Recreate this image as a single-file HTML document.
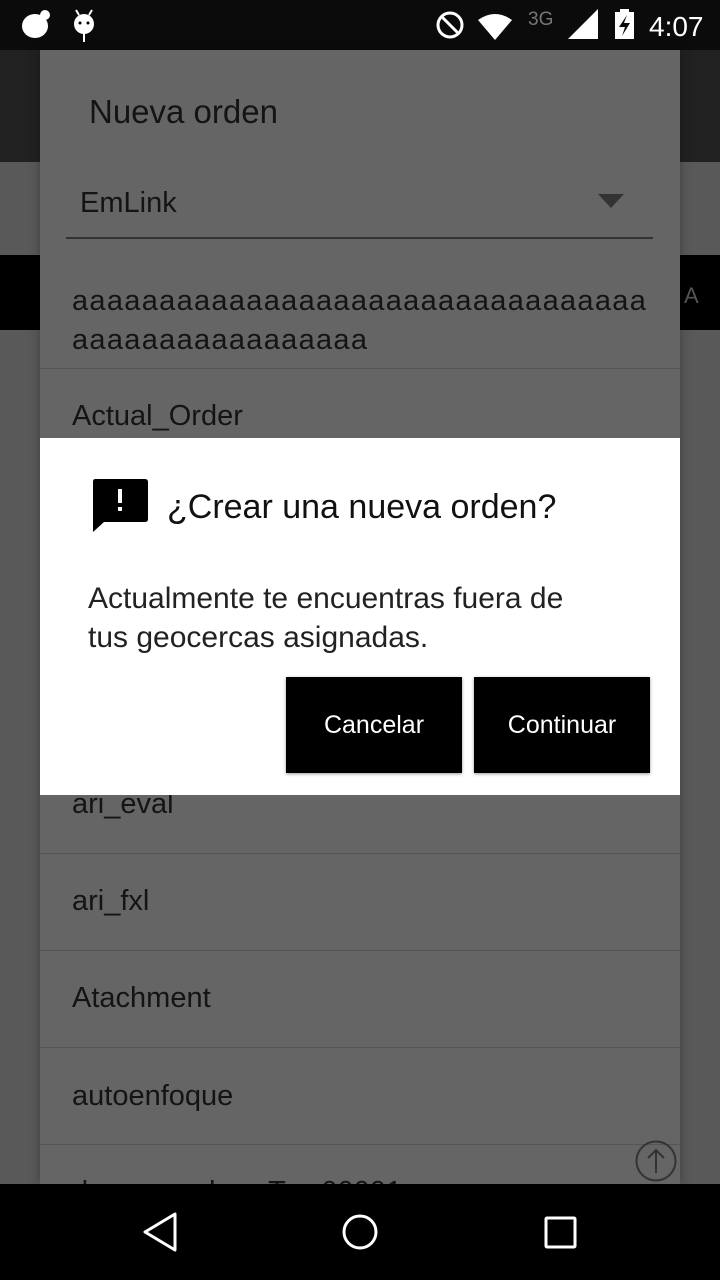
<!DOCTYPE html>
<html><head><meta charset="utf-8"><style>
*{margin:0;padding:0;box-sizing:border-box}
body{width:720px;height:1280px;overflow:hidden;background:#595959;font-family:"Liberation Sans",sans-serif;position:relative}
.abs{position:absolute}
.t{color:#141414;font-size:29px;white-space:nowrap}
.div{position:absolute;left:40px;width:640px;height:1px;background:#555}
</style></head><body>
<div class="abs" style="left:0;top:0;width:720px;height:50px;background:#0b0b0b"></div>
<div class="abs" style="left:0;top:50px;width:720px;height:112px;background:#212121"></div>
<div class="abs" style="left:0;top:255px;width:720px;height:75px;background:#000"></div>
<div class="abs" style="left:684px;top:283px;color:#555;font-size:22px">A</div>
<svg class="abs" style="left:0;top:0" width="720" height="50">
<ellipse cx="35" cy="26" rx="13" ry="12" fill="#fff"/><circle cx="45" cy="15" r="5" fill="#fff"/>
<ellipse cx="84" cy="24" rx="10" ry="10" fill="#fff"/><rect x="83" y="30" width="2" height="12" fill="#fff"/>
<line x1="76" y1="10" x2="79" y2="15" stroke="#fff" stroke-width="2"/><line x1="92" y1="10" x2="89" y2="15" stroke="#fff" stroke-width="2"/>
<circle cx="80" cy="23" r="1.5" fill="#000"/><circle cx="88" cy="23" r="1.5" fill="#000"/>
<circle cx="450" cy="25" r="12" fill="none" stroke="#fff" stroke-width="3"/><line x1="442" y1="17" x2="458" y2="33" stroke="#fff" stroke-width="3"/>
<path d="M478 20 Q495 8 512 20 L495 40 Z" fill="#fff"/>
<text x="528" y="25" fill="#777" font-size="19" font-family="Liberation Sans">3G</text>
<path d="M568 39 L598 9 L598 39 Z" fill="#fff"/>
<rect x="615" y="12" width="19" height="27" fill="#fff"/><rect x="620" y="9" width="9" height="4" fill="#fff"/>
<path d="M627 15 L619 27 L625 27 L622 36 L630 23 L624 23 Z" fill="#0b0b0b"/>
<text x="649" y="36" fill="#fff" font-size="28" font-family="Liberation Sans">4:07</text>
</svg>
<div class="abs" style="left:40px;top:50px;width:640px;height:1134px;background:#656565;box-shadow:0 0 10px rgba(0,0,0,.3)"></div>
<div class="abs t" style="left:89px;top:93px;font-size:33px">Nueva orden</div>
<div class="abs t" style="left:80px;top:187px">EmLink</div>
<svg class="abs" style="left:598px;top:194px" width="28" height="16"><path d="M0 0 L26 0 L13 14Z" fill="#333"/></svg>
<div class="abs" style="left:66px;top:237px;width:587px;height:2px;background:#333"></div>
<div class="abs t" style="left:72px;top:285px;letter-spacing:1.3px">aaaaaaaaaaaaaaaaaaaaaaaaaaaaaaaaa</div>
<div class="abs t" style="left:72px;top:324px;letter-spacing:1.3px">aaaaaaaaaaaaaaaaa</div>
<div class="div" style="top:368px"></div>
<div class="abs t" style="left:72px;top:400px">Actual_Order</div>
<div class="abs t" style="left:72px;top:788px">ari_eval</div>
<div class="div" style="top:853px"></div>
<div class="abs t" style="left:72px;top:885px">ari_fxl</div>
<div class="div" style="top:950px"></div>
<div class="abs t" style="left:72px;top:982px">Atachment</div>
<div class="div" style="top:1047px"></div>
<div class="abs t" style="left:72px;top:1080px">autoenfoque</div>
<div class="div" style="top:1144px"></div>
<div class="abs t" style="left:72px;top:1176px">descarga docs Tes 00001</div>
<svg class="abs" style="left:634px;top:1139px" width="44" height="44"><circle cx="22" cy="22" r="19.5" fill="none" stroke="#333" stroke-width="2"/><path d="M22 34 V11 M14 19 L22 11 L30 19" fill="none" stroke="#333" stroke-width="2"/></svg>
<div class="abs" style="left:40px;top:438px;width:640px;height:357px;background:#fff"></div>
<svg class="abs" style="left:92px;top:479px" width="56" height="54"><path d="M3 0 H53 Q56 0 56 3 V40 Q56 43 53 43 H12 L1 53 V3 Q1 0 3 0Z" fill="#000"/><rect x="26" y="10" width="4" height="14" fill="#fff"/><rect x="26" y="28" width="4" height="4" fill="#fff"/></svg>
<div class="abs" style="left:167px;top:488px;font-size:34px;color:#111;white-space:nowrap">¿Crear una nueva orden?</div>
<div class="abs" style="left:88px;top:579px;font-size:30px;color:#222;line-height:39px;white-space:nowrap">Actualmente te encuentras fuera de<br>tus geocercas asignadas.</div>
<div class="abs" style="left:286px;top:677px;width:176px;height:96px;background:#000;color:#fff;font-size:25px;display:flex;align-items:center;justify-content:center;box-shadow:0 1px 3px rgba(0,0,0,.4)">Cancelar</div>
<div class="abs" style="left:474px;top:677px;width:176px;height:96px;background:#000;color:#fff;font-size:25px;display:flex;align-items:center;justify-content:center;box-shadow:0 1px 3px rgba(0,0,0,.4)">Continuar</div>
<div class="abs" style="left:0;top:1184px;width:720px;height:96px;background:#000"></div>
<svg class="abs" style="left:0;top:1184px" width="720" height="96">
<path d="M175 30 L145 48 L175 66 Z" fill="none" stroke="#fff" stroke-width="3" stroke-linejoin="round"/>
<ellipse cx="360" cy="48" rx="16" ry="16" fill="none" stroke="#fff" stroke-width="3"/>
<rect x="546" y="34" width="29" height="29" rx="1" fill="none" stroke="#fff" stroke-width="3"/>
</svg>
</body></html>
